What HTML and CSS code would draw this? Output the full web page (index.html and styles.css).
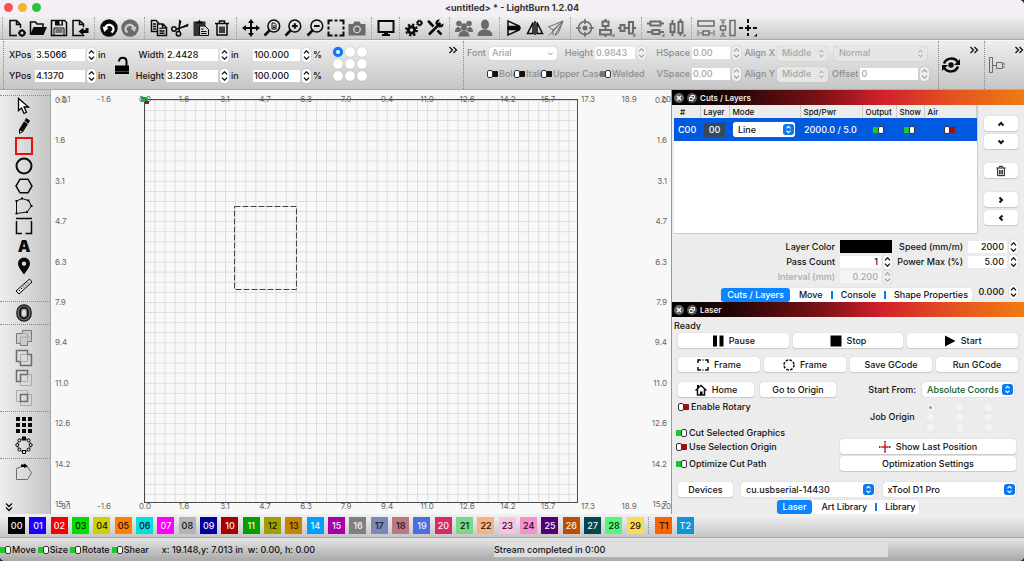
FILE: index.html
```html
<!DOCTYPE html>
<html lang="en">
<head>
<meta charset="utf-8">
<title>&lt;untitled&gt; * - LightBurn 1.2.04</title>
<link rel="stylesheet" href="styles.css">
</head>
<body>
<svg class="defs" aria-hidden="true">
  <symbol id="step" viewBox="0 0 9 14"><path d="M2.300 5 4.500 2.800 6.700 5M2.300 9 4.500 11.200 6.700 9" fill="none" stroke="currentColor" stroke-width="1.300" stroke-linecap="round" stroke-linejoin="round"/></symbol>
  <symbol id="more" viewBox="0 0 10 8"><path d="M1.500 1 4.500 4 1.500 7M5.500 1 8.500 4 5.500 7" fill="none" stroke="currentColor" stroke-width="1.300"/></symbol>
  <symbol id="trash" viewBox="0 0 18 18"><path d="M2 4.500h14M6.500 4V2h5v2M4 5v11h10V5M7 7.500v6.500M9 7.500v6.500M11 7.500v6.500" fill="none" stroke="currentColor" stroke-width="1.500"/></symbol>
  <symbol id="float" viewBox="0 0 10 10"><circle cx="5" cy="5" r="5" fill="#555"/><path d="M2.500 4.500h3.500v3h-3.500zM4 4V2.500h3.500v3H6.500" fill="none" stroke="#fff"/></symbol>
  <symbol id="close" viewBox="0 0 10 10"><circle cx="5" cy="5" r="5" fill="#666"/><path d="M3 3l4 4M7 3 3 7" stroke="#fff" stroke-width="1.500"/></symbol>
</svg>
<div class="window">
  <header class="titlebar">
    <div class="lights"><span class="light red"></span><span class="light amber"></span><span class="light green"></span></div>
    <h1>&lt;untitled&gt; * - LightBurn 1.2.04</h1>
  </header>

  <nav class="toolbar" aria-label="Main">
    <div class="group n4">
      <button class="tool" aria-label="New"><svg viewBox="0 0 18 18"><path class="s" d="M9 16.500H2v-15h6.500l4 4V9M8.500 1.500v4h4"/><circle class="s b" cx="14" cy="14" r="2.500"/><path class="s" d="M14 10v1.500M14 16.500V18M10 14h1.500M16 14h2"/></svg></button>
      <button class="tool" aria-label="Open"><svg viewBox="0 0 18 18"><path class="s" d="M1.500 15.500V3h5l1.500 2h6v3"/><path d="M4.500 8H18l-3.500 8H1z"/></svg></button>
      <button class="tool" aria-label="Save"><svg viewBox="0 0 18 18"><path class="s" d="M1.500 1.500h13l2 2v13h-15z"/><path d="M5 1h8v5.500H5z"/><path fill="#ddd" d="M9.500 2h2v3.500h-2z"/><path class="s thin" d="M4 16.500V9h10v7.500M5.500 11h7M5.500 13h7"/></svg></button>
      <button class="tool" aria-label="Import"><svg viewBox="0 0 18 18"><path class="s" d="M12.500 8V5l-4-3.500H2v15h10.500V16M8.500 1.500v4h4"/><path d="M17.500 9v5h-5v2.500L7.500 12.500l5-4V11h2V9z"/></svg></button>
    </div>
    <div class="group n2">
      <button class="tool" aria-label="Undo"><svg viewBox="0 0 18 18"><circle cx="9" cy="9" r="8.700"/><path d="M5 9.500C6 5.500 11 4.500 13 8c1 2 .5 4-1.500 5.500" fill="none" stroke="#fff" stroke-width="2.200"/><path d="M2.500 7.500l6 1.500-4.200 4z" fill="#fff"/></svg></button>
      <button class="tool gray" aria-label="Redo"><svg viewBox="0 0 18 18"><circle cx="9" cy="9" r="8.700"/><path d="M13 9.500C12 5.500 7 4.500 5 8c-1 2-.5 4 1.500 5.500" fill="none" stroke="#ccc" stroke-width="2.200"/><path d="M15.500 7.500l-6 1.500 4.200 4z" fill="#ccc"/></svg></button>
    </div>
    <div class="group n4">
      <button class="tool" aria-label="Copy"><svg viewBox="0 0 18 18"><path class="s" d="M7 12.500H1.500v-11H6l3 3M3 5h3M3 7.500h3M3 10h3"/><path class="s" d="M7.500 5h5.500l3.500 3.500v8h-9zM12.500 5v4h4M9.500 9.500h2M9.500 12h5M9.500 14.200h5"/></svg></button>
      <button class="tool" aria-label="Cut"><svg viewBox="0 0 18 18"><circle class="s" cx="3" cy="10" r="2.200"/><circle class="s" cx="7.500" cy="14.700" r="2.200"/><path class="s" d="M5 10.500 17 6M8 12.500 9 1.500"/><path d="M8 9.500 17.500 4.500l-.5 3zM7.500 10.500 8 .5l2.500 2z"/></svg></button>
      <button class="tool" aria-label="Paste"><svg viewBox="0 0 18 18"><path fill="#333" d="M1.500 2.500h12V7H7v10H1.500z"/><path d="M4.500 4.500V2.500h2L7.500.500l1 2h2v2z"/><path class="s thin" fill="#ddd" d="M7.500 7h5.500l3.500 3.500v6h-9zM9 10h2.500M9 12.500h5.500M9 14.500h5.500"/></svg></button>
      <button class="tool" aria-label="Delete"><svg><use href="#trash"/></svg></button>
    </div>
    <div class="group n6">
      <button class="tool" aria-label="Pan"><svg viewBox="0 0 18 18"><path class="s b" d="M9 3v12M3 9h12"/><path d="M9 0l3 4H6zM9 18l3-4H6zM0 9l4-3v6zM18 9l-4-3v6z"/></svg></button>
      <button class="tool" aria-label="Zoom to page"><svg viewBox="0 0 18 18"><circle class="s" cx="10.800" cy="7" r="5.900"/><path class="s w" d="M6.500 11.500 1.500 16.500"/><path class="s thin" d="M9 4h2.500l1.500 1.500V10H9zM10 7h2M10 8.500h2"/></svg></button>
      <button class="tool" aria-label="Zoom in"><svg viewBox="0 0 18 18"><circle class="s" cx="10.800" cy="7" r="5.900"/><path class="s w" d="M6.500 11.500 1.500 16.500"/><path class="s b" d="M8 7h5.600M10.800 4.200v5.600"/></svg></button>
      <button class="tool" aria-label="Zoom out"><svg viewBox="0 0 18 18"><circle class="s" cx="10.800" cy="7" r="5.900"/><path class="s w" d="M6.500 11.500 1.500 16.500"/><path class="s b" d="M8 7h5.600"/></svg></button>
      <button class="tool" aria-label="Frame selection"><svg viewBox="0 0 18 18"><path class="s b" d="M1.500 5.500v-4h4M7.500 1.500h3M12.500 1.500h4v4M16.500 7.500v3M16.500 12.500v4h-4M10.500 16.500h-3M5.500 16.500h-4v-4M1.500 10.500v-3"/></svg></button>
      <button class="tool gray" aria-label="Camera"><svg viewBox="0 0 18 18"><path fill-rule="evenodd" d="M.5 5h4.500l1.500-2.500h5L13 5h4.500v11.500H.5zM9 6.500a3.900 3.900 0 1 0 .01 0z"/><circle cx="9" cy="10.400" r="2.600"/></svg></button>
    </div>
    <div class="group n1">
      <button class="tool" aria-label="Preview"><svg viewBox="0 0 18 18"><path class="s b" d="M1.500 2h15v11h-15z"/><path d="M7 13h4v2h2v2H5v-2h2z"/></svg></button>
    </div>
    <div class="group n2">
      <button class="tool" aria-label="Settings"><svg viewBox="0 0 18 18"><circle cx="6.500" cy="11" r="3.200" fill="none" stroke="currentColor" stroke-width="3"/><circle cx="6.500" cy="11" r="5.500" fill="none" stroke="currentColor" stroke-width="2" stroke-dasharray="2.300 2"/><circle cx="14.500" cy="4" r="1.900" fill="none" stroke="currentColor" stroke-width="1.700"/><circle cx="14.500" cy="4" r="3" fill="none" stroke="currentColor" stroke-dasharray="1.300 1.050"/></svg></button>
      <button class="tool" aria-label="Device settings"><svg viewBox="0 0 18 18"><path d="M3 15.500 14.500 4M3.500 3.500l4 4" class="s w"/><path d="M1 2.500 3 1l3.500 3.500L4.500 6z"/><path class="s w" d="M11.500 11.500 15.500 15.500"/><path d="M17.500 4.500 14.500 6 12 3.500 14 .5c-3-.5-5 2-4.500 4.500l3.500 3.500c3 .500 5-1.500 4.500-4z"/></svg></button>
    </div>
    <div class="group n2">
      <button class="tool gray" aria-label="Group"><svg viewBox="0 0 18 18"><circle cx="4" cy="4.500" r="2.800"/><circle cx="14" cy="4.500" r="2.800"/><path d="M0 13c0-4 2-5 4-5l3 3-3 2zM18 13c0-4-2-5-4-5l-3 3 3 2z"/><ellipse cx="9" cy="8" rx="3" ry="3.700"/><path d="M3.500 17.500c0-4 2.500-5 4-5.500h3c1.500.5 4 1.500 4 5.500z"/></svg></button>
      <button class="tool gray" aria-label="Ungroup"><svg viewBox="0 0 18 18"><ellipse cx="9" cy="5.500" rx="4" ry="5"/><path d="M1.500 17c0-4.500 3-5.500 5.500-6.500h4c2.500 1 5.500 2 5.500 6.500z"/></svg></button>
    </div>
    <div class="group n3">
      <button class="tool" aria-label="Flip vertical"><svg viewBox="0 0 18 18"><path class="s" d="M3 2v5.500h12zM3 16v-5.500h12zM2 9h14"/></svg></button>
      <button class="tool" aria-label="Flip horizontal"><svg viewBox="0 0 18 18"><path class="s" d="M1.500 14.500H7V3.500zM16.500 14.500H11V3.500zM9 2v14"/></svg></button>
      <button class="tool gray" aria-label="Mirror across line"><svg viewBox="0 0 18 18"><path class="s thin" d="M1.500 8 16 2 6 11zM8 16.500 16 2l-4.500 11.500zM2 16.500 16 2M6 11v5"/></svg></button>
    </div>
    <div class="group n3">
      <button class="tool gray" aria-label="Center on page"><svg viewBox="0 0 18 18"><circle class="s" cx="9" cy="9" r="6.500"/><circle cx="9" cy="9" r="2.500"/><path class="s" d="M9 0v5M9 13v5M0 9h5M13 9h5"/></svg></button>
      <button class="tool gray" aria-label="Align vertical centers"><svg viewBox="0 0 18 18"><path class="s b" d="M5.500 2.500h6v4.500h-6zM3 11h11v4.500H3zM8.500 0v2M8.500 6.500V11M8.500 15.500V18"/><path d="M17.500 14.500v3h-3z"/></svg></button>
      <button class="tool gray" aria-label="Align horizontal centers"><svg viewBox="0 0 18 18"><path class="s b" d="M2.500 6h4v6h-4zM11 3h4v11.500h-4zM0 9h3M7 9h4M15.500 9H18"/><path d="M17.500 14.500v3h-3z"/></svg></button>
    </div>
    <div class="group n2">
      <button class="tool gray" aria-label="Distribute vertically"><svg viewBox="0 0 18 18"><path class="s b" d="M3.500 2.500h10v4h-10zM5.500 11h7v4h-7zM0 4.500h3.500M13.500 4.500H17M0 13h5.500M12.500 13H17"/><path d="M17.500 14.500v3h-3z"/></svg></button>
      <button class="tool gray" aria-label="Distribute horizontally"><svg viewBox="0 0 18 18"><path class="s b" d="M2.500 5h4v8h-4zM10.500 3h4v11h-4zM4.500 1v4M4.500 13v4M12.500 0v3M12.500 14v3"/><path d="M17.500 14.500v3h-3z"/></svg></button>
    </div>
    <div class="group n3">
      <button class="tool gray" aria-label="Match width"><svg viewBox="0 0 18 18"><path class="s" d="M1 2h16v5H1zM6 12h6v4H6z"/><path class="s thin" d="M1 11v6M17 11v6M2 14h4M12 14h4"/></svg></button>
      <button class="tool gray" aria-label="Match height"><svg viewBox="0 0 18 18"><path class="s" d="M12 1.500h5v15h-5zM2.500 7h5v4h-5z"/><path class="s thin" d="M2 1h6M2 17h6M5 2v5M5 11v5M3.500 4 5 2l1.500 2M3.500 14 5 16l1.500-2"/></svg></button>
      <button class="tool" aria-label="Move to position"><svg viewBox="0 0 18 18"><path class="s b" d="M9 0v4M9 6v6M9 14v3M0 9h4M6 9h6M14 9h4"/><path d="M18 14.500v3h-3z"/></svg></button>
    </div>
  </nav>

  <section class="options" aria-label="Object properties">
    <div class="opt-group position">
      <div class="pos-grid">
        <label for="xpos">XPos</label><input id="xpos" value="3.5066"><button class="step" aria-label="Step X"><svg><use href="#step"/></svg></button><span>in</span>
        <button class="lock" aria-label="Lock aspect ratio"><svg viewBox="0 0 16 19"><path d="M5 5.500c0-5 7.500-5 7.500 0V10" fill="none" stroke="#000" stroke-width="2"/><path d="M1 9.500h14V18H1z"/><path d="M1 15.500h14" stroke="#444"/></svg></button>
        <label for="w" class="end">Width</label><input id="w" value="2.4428"><button class="step" aria-label="Step width"><svg><use href="#step"/></svg></button><span>in</span>
        <input aria-label="Width percent" value="100.000"><button class="step" aria-label="Step width percent"><svg><use href="#step"/></svg></button><span>%</span>
        <label for="ypos">YPos</label><input id="ypos" value="4.1370"><button class="step" aria-label="Step Y"><svg><use href="#step"/></svg></button><span>in</span>
        <label for="h" class="end">Height</label><input id="h" value="3.2308"><button class="step" aria-label="Step height"><svg><use href="#step"/></svg></button><span>in</span>
        <input aria-label="Height percent" value="100.000"><button class="step" aria-label="Step height percent"><svg><use href="#step"/></svg></button><span>%</span>
      </div>
      <div class="anchors" role="radiogroup" aria-label="Anchor">
        <input type="radio" name="a" aria-label="Top left" checked><input type="radio" name="a" aria-label="Top"><input type="radio" name="a" aria-label="Top right"><input type="radio" name="a" aria-label="Left"><input type="radio" name="a" aria-label="Center"><input type="radio" name="a" aria-label="Right"><input type="radio" name="a" aria-label="Bottom left"><input type="radio" name="a" aria-label="Bottom"><input type="radio" name="a" aria-label="Bottom right">
      </div>
      <button class="more" aria-label="More"><svg><use href="#more"/></svg></button>
    </div>
    <div class="opt-group text-opts">
      <div class="text-grid">
        <label for="font">Font</label>
        <select id="font" class="combo" disabled><option>Arial</option></select>
        <label for="fh" class="end">Height</label><input id="fh" value="0.9843" disabled><button class="step" aria-label="Step font height" disabled><svg><use href="#step"/></svg></button>
        <label for="hs" class="end">HSpace</label><input id="hs" value="0.00" disabled><button class="step" aria-label="Step HSpace" disabled><svg><use href="#step"/></svg></button>
        <label for="ax" class="end">Align X</label><select id="ax" class="pop" disabled><option>Middle</option></select>
        <select class="pop wide" aria-label="Text mode" disabled><option>Normal</option></select>
        <div class="styles">
          <label><input type="checkbox" class="tog">Bold</label><label><input type="checkbox" class="tog">Italic</label><label class="upper"><input type="checkbox" class="tog">Upper Case</label><label class="rest"><input type="checkbox" class="tog" checked>Welded</label>
        </div>
        <label for="vs" class="end">VSpace</label><input id="vs" value="0.00" disabled><button class="step" aria-label="Step VSpace" disabled><svg><use href="#step"/></svg></button>
        <label for="ay" class="end">Align Y</label><select id="ay" class="pop" disabled><option>Middle</option></select>
        <div class="offset"><label for="off">Offset</label><input id="off" value="0" disabled><button class="step" aria-label="Step offset" disabled><svg><use href="#step"/></svg></button></div>
      </div>
    </div>
    <div class="opt-group extra">
      <button class="tool big" aria-label="Rotate"><svg viewBox="0 0 18 18"><circle cx="9" cy="9" r="2.700"/><path class="s w" d="M2 7.500C4 1.500 13 1 15.500 6M16 10.500C14 16.500 5 17 2.500 12"/><path d="M18 3v6h-6zM0 15V9h6z"/></svg></button>
      <button class="more" aria-label="More"><svg><use href="#more"/></svg></button>
    </div>
    <div class="opt-group last">
      <button class="tool big gray" aria-label="Dock left"><svg viewBox="0 0 18 18"><path class="s thin" d="M2.500 1.500h3v15h-3zM9.500 6.500h6v6h-6zM6 9.500h3.500M15.500 8H18M15.500 11H18"/></svg></button>
      <button class="more" aria-label="More"><svg><use href="#more"/></svg></button>
    </div>
  </section>

  <main class="main">
    <nav class="side" aria-label="Drawing tools">
      <div class="side-group first">
        <button class="tool" aria-label="Select"><svg viewBox="0 0 18 18"><path fill="#fff" stroke="#000" stroke-width="1.300" d="M3.500 1.500v12l3-2.500 2.500 5.500 2.500-1.200L9 10h4.500z"/></svg></button>
        <button class="tool" aria-label="Draw lines"><svg viewBox="0 0 18 18"><path d="M11 1 15 3.500 13.500 6.500 9.500 4zM9 4.500l4 2.500-5 8L4 12.500z"/><path class="s thin" d="M4.500 12.500v4l3.500-2z"/></svg></button>
        <button class="tool" aria-label="Rectangle"><svg viewBox="0 0 18 18"><path fill="none" stroke="#e3120b" stroke-width="2" d="M1 1h16v16H1z"/></svg></button>
        <button class="tool" aria-label="Ellipse"><svg viewBox="0 0 18 18"><circle class="s b" cx="9" cy="9" r="7.500"/></svg></button>
        <button class="tool" aria-label="Polygon"><svg viewBox="0 0 18 18"><path class="s" d="M5 2.200h8L17 9l-4 6.800H5L1 9z"/></svg></button>
        <button class="tool" aria-label="Edit nodes"><svg viewBox="0 0 18 18"><path class="s thin" d="M1.500 16.500V4L7 1.500l6.500 2L16.500 9l-4.500 6z"/><path d="M6 .5h2v2H6zM12.500 2.500h2v2h-2zM15.500 8h2v2h-2zM11 14h2v2h-2zM.5 15.500h2v2h-2zM.5 3h2v2h-2z"/></svg></button>
        <button class="tool" aria-label="Trim shapes"><svg viewBox="0 0 18 18"><path class="s" d="M1 1.500h16M1.500 4v12.500H7M16.500 4v12.500h-6"/></svg></button>
        <button class="tool letter" aria-label="Create text">A</button>
        <button class="tool" aria-label="Position laser"><svg viewBox="0 0 18 18"><path fill-rule="evenodd" d="M9 17.500C6 13 3 10 3 6.500a6 6 0 0 1 12 0C15 10 12 13 9 17.500zM9 4.500a2.200 2.200 0 1 0 .01 0z"/></svg></button>
        <button class="tool" aria-label="Measure"><svg viewBox="0 0 18 18"><path class="s thin" d="M1 14 14.500 2l2.500 3L4 17zM4 13l1 1M6 11l1 1M8 9.500l1 1M10 7.500l1 1M12 5.500l1 1"/></svg></button>
      </div>
      <div class="side-group tight">
        <button class="tool" aria-label="Offset shapes"><svg viewBox="0 0 18 18"><rect x="2" y="1" width="14" height="16" rx="7" fill="#777" stroke="#222" stroke-width="1.500"/><rect x="5" y="3.500" width="8" height="11" rx="4" fill="none" stroke="#000" stroke-width="1.500"/><rect x="7" y="5.500" width="4" height="7" rx="2" fill="#ddd"/></svg></button>
      </div>
      <div class="side-group">
        <button class="tool gray" aria-label="Weld"><svg viewBox="0 0 18 18"><path fill="#ccc" stroke="#777" d="M1.500 4.500h6v-3h9v11h-4v4h-7v-2h-4z"/><path class="s faint" d="M7 4.500h5.500v8M5.500 14V8h11"/></svg></button>
        <button class="tool gray" aria-label="Boolean union"><svg viewBox="0 0 18 18"><path class="s" d="M1.500 1.500h11v4h4v11h-11v-4h-4z"/><path class="s faint" d="M5.500 12.500v-7h7v7z"/></svg></button>
        <button class="tool gray" aria-label="Boolean subtract"><svg viewBox="0 0 18 18"><path class="s faint" d="M5.500 5.500h11v11h-11z"/><path class="s" d="M1.500 1.500h11v4h-7v7h-4z"/><path class="s faint" d="M12.500 5.500v7h-7"/></svg></button>
        <button class="tool gray" aria-label="Boolean intersect"><svg viewBox="0 0 18 18"><path class="s faint" d="M1.500 1.500h11v11h-11zM5.500 5.500h11v11h-11z"/><path class="s" d="M5.500 5.500h7v7h-7z"/></svg></button>
      </div>
      <div class="side-group">
        <button class="tool" aria-label="Grid array"><svg viewBox="0 0 18 18"><path d="M1 1h4v4H1zM7 1h4v4H7zM13 1h4v4h-4zM1 7h4v4H1zM7 7h4v4H7zM13 7h4v4h-4zM1 13h4v4H1zM7 13h4v4H7zM13 13h4v4h-4z"/></svg></button>
        <button class="tool" aria-label="Circular array"><svg viewBox="0 0 18 18"><circle class="s thin" cx="9" cy="9" r="6.500"/><g fill="#ddd" stroke="#000"><circle cx="4.400" cy="4.400" r="1.500"/><circle cx="13.600" cy="4.400" r="1.500"/><circle cx="2.300" cy="9" r="1.500"/><circle cx="15.700" cy="9" r="1.500"/><circle cx="4.400" cy="13.600" r="1.500"/><circle cx="13.600" cy="13.600" r="1.500"/><path d="M7.500 14.500h3v3h-3z"/></g><path d="M7 .5h4v4H7z"/></svg></button>
      </div>
      <div class="side-group">
        <button class="tool gray" aria-label="Copy along path"><svg viewBox="0 0 18 18"><path class="s thin" d="M1.500 16.500V5.500L8 3l5 1.500 3.500 5.500-4 6.500z"/><path fill="#000" d="M6 1.500v2.500h3V5l4-2-4-2.500v1z"/></svg></button>
      </div>
      <button class="more down" aria-label="More tools"><svg><use href="#more"/></svg></button>
    </nav>

    <section class="canvas" aria-label="Workspace">
      <svg class="sheet" viewBox="51 90 620 424" preserveAspectRatio="xMinYMin slice">
        <defs><pattern id="grid" x="144.300" y="100" width="10.100" height="10.100" patternUnits="userSpaceOnUse"><path d="M0 .5h10.100M.5 0v10.100" stroke="#dcdcdc" fill="none"/></pattern></defs>
        <rect x="144" y="99" width="434" height="404" fill="url(#grid)"/>
        <rect x="144.500" y="99.500" width="433" height="403" fill="none" stroke="#4a4a4a"/>
        <rect x="234.500" y="206.500" width="62" height="83" fill="none" stroke="#444" stroke-dasharray="6 2"/>
        <g class="ruler">
          <g text-anchor="middle">
            <text x="64" y="102">-3.1</text><text x="104" y="102">-1.6</text><text x="145" y="102">0.0</text><text x="184" y="102">1.6</text><text x="225" y="102">3.1</text><text x="265" y="102">4.7</text><text x="306" y="102">6.3</text><text x="346" y="102">7.9</text><text x="387" y="102">9.4</text><text x="427" y="102">11.0</text><text x="467" y="102">12.6</text><text x="508" y="102">14.2</text><text x="548" y="102">15.7</text><text x="588" y="102">17.3</text><text x="629" y="102">18.9</text><text x="666" y="102">20</text>
            <text x="64" y="509">-3.1</text><text x="104" y="509">-1.6</text><text x="145" y="509">0.0</text><text x="184" y="509">1.6</text><text x="225" y="509">3.1</text><text x="265" y="509">4.7</text><text x="306" y="509">6.3</text><text x="346" y="509">7.9</text><text x="387" y="509">9.4</text><text x="427" y="509">11.0</text><text x="467" y="509">12.6</text><text x="508" y="509">14.2</text><text x="548" y="509">15.7</text><text x="588" y="509">17.3</text><text x="629" y="509">18.9</text><text x="666" y="509">20</text>
          </g>
          <text x="55" y="103">0.0</text><text x="55" y="143">1.6</text><text x="55" y="184">3.1</text><text x="55" y="224">4.7</text><text x="55" y="265">6.3</text><text x="55" y="305">7.9</text><text x="55" y="345">9.4</text><text x="55" y="386">11.0</text><text x="55" y="426">12.6</text><text x="55" y="467">14.2</text><text x="55" y="507">15.7</text>
          <g text-anchor="end"><text x="667" y="103">0.0</text><text x="667" y="143">1.6</text><text x="667" y="184">3.1</text><text x="667" y="224">4.7</text><text x="667" y="265">6.3</text><text x="667" y="305">7.9</text><text x="667" y="345">9.4</text><text x="667" y="386">11.0</text><text x="667" y="426">12.6</text><text x="667" y="467">14.2</text><text x="667" y="507">15.7</text></g>
        </g>
        <path d="M141 97h7v5h-7z" fill="#0fc23a"/><path d="M142 98h3M146 99v2" stroke="#064"/><path d="M145 101h4v3h-4z" fill="#8a2414"/>
      </svg>
    </section>

    <aside class="dock">
      <section class="panel cuts">
        <header class="panel-head"><button aria-label="Close"><svg><use href="#close"/></svg></button><button aria-label="Float"><svg><use href="#float"/></svg></button><h2>Cuts / Layers</h2></header>
        <div class="layers">
          <div class="table-wrap">
            <table>
              <colgroup><col class="c1"><col class="c2"><col class="c3"><col class="c4"><col class="c5"><col class="c6"><col></colgroup>
              <thead><tr><th>#</th><th>Layer</th><th>Mode</th><th>Spd/Pwr</th><th>Output</th><th>Show</th><th>Air</th></tr></thead>
              <tbody><tr><td>C00</td><td><span class="chip">00</span></td><td><select class="pop blue mode" aria-label="Mode"><option>Line</option></select></td><td>2000.0 / 5.0</td><td class="mid"><input type="checkbox" class="tog" aria-label="Output" checked></td><td class="mid"><input type="checkbox" class="tog" aria-label="Show" checked></td><td class="mid"><input type="checkbox" class="tog" aria-label="Air"></td></tr></tbody>
            </table>
          </div>
          <div class="layer-buttons">
            <button class="btn" aria-label="Move up"><svg viewBox="0 0 8 8"><path class="s b" d="M1.500 5.500 4 3l2.500 2.500"/></svg></button>
            <button class="btn gap-b" aria-label="Move down"><svg viewBox="0 0 8 8"><path class="s b" d="M1.500 2.500 4 5l2.500-2.500"/></svg></button>
            <button class="btn gap-b" aria-label="Delete layer"><svg class="bin"><use href="#trash"/></svg></button>
            <button class="btn" aria-label="Move right"><svg viewBox="0 0 8 8"><path class="s b" d="M2.500 1.500 5 4 2.500 6.500"/></svg></button>
            <button class="btn" aria-label="Move left"><svg viewBox="0 0 8 8"><path class="s b" d="M5.500 1.500 3 4l2.500 2.500"/></svg></button>
          </div>
        </div>
        <div class="params">
          <span>Layer Color</span><button class="color" aria-label="Layer color black"></button>
          <label for="spd">Speed (mm/m)</label><span class="field"><input id="spd" value="2000"><button class="step" aria-label="Step speed"><svg><use href="#step"/></svg></button></span>
          <label for="pass">Pass Count</label><span class="field"><input id="pass" value="1"><button class="step" aria-label="Step passes"><svg><use href="#step"/></svg></button></span>
          <label for="pow">Power Max (%)</label><span class="field"><input id="pow" value="5.00"><button class="step" aria-label="Step power"><svg><use href="#step"/></svg></button></span>
          <label for="int" class="off">Interval (mm)</label><span class="field"><input id="int" value="0.200" disabled><button class="step" aria-label="Step interval" disabled><svg><use href="#step"/></svg></button></span>
        </div>
        <div class="tab-row">
          <div class="tabs" role="tablist"><button role="tab" class="on" aria-selected="true">Cuts / Layers</button><button role="tab">Move</button><button role="tab">Console</button><button role="tab">Shape Properties</button></div>
          <span class="field"><input value="0.000" aria-label="Z offset"><button class="step" aria-label="Step Z offset"><svg><use href="#step"/></svg></button></span>
        </div>
      </section>

      <section class="panel laser">
        <header class="panel-head"><button aria-label="Close"><svg><use href="#close"/></svg></button><button aria-label="Float"><svg><use href="#float"/></svg></button><h2>Laser</h2></header>
        <p class="ready">Ready</p>
        <div class="laser-body">
          <div class="thirds">
            <button class="btn"><svg viewBox="0 0 12 12"><path d="M1 .5h4v11H1zM7.500.5h4v11h-4z"/></svg>Pause</button>
            <button class="btn"><svg viewBox="0 0 12 12"><path d="M.5.5h11v11H.5z"/></svg>Stop</button>
            <button class="btn"><svg viewBox="0 0 12 12"><path d="M1 .5 11.500 6 1 11.500z"/></svg>Start</button>
          </div>
          <div class="quarters">
            <button class="btn"><svg viewBox="0 0 12 12"><path class="s" d="M1 4V1h3M8 1h3v3M11 8v3H8M4 11H1V8M5.500 1h1M5.500 11h1"/></svg>Frame</button>
            <button class="btn"><svg viewBox="0 0 12 12"><circle class="s" cx="6" cy="6" r="5" stroke-dasharray="2.600 1.300"/></svg>Frame</button>
            <button class="btn">Save GCode</button>
            <button class="btn">Run GCode</button>
          </div>
          <div class="home-row">
            <button class="btn home"><svg viewBox="0 0 12 12"><path class="s" d="M.5 6.500 6 1.500l5.500 5M2.500 5v6h7V5"/><path d="M5 7.500h2.500V11H5zM2 1h2v3H2z"/></svg>Home</button>
            <button class="btn home">Go to Origin</button>
            <label for="from">Start From:</label>
            <select id="from" class="pop blue from"><option>Absolute Coords</option></select>
          </div>
          <div class="split">
            <div class="checks">
              <label class="rotary"><input type="checkbox" class="tog">Enable Rotary</label>
              <label><input type="checkbox" class="tog" checked>Cut Selected Graphics</label>
              <label class="sel"><input type="checkbox" class="tog">Use Selection Origin</label>
              <label><input type="checkbox" class="tog" checked>Optimize Cut Path</label>
            </div>
            <div class="job">
              <div class="origin"><span>Job Origin</span>
                <div class="origin-grid" role="radiogroup" aria-label="Job Origin"><input type="radio" name="o" aria-label="Back left" checked disabled><input type="radio" name="o" aria-label="Back" disabled><input type="radio" name="o" aria-label="Back right" disabled><input type="radio" name="o" aria-label="Left" disabled><input type="radio" name="o" aria-label="Center" disabled><input type="radio" name="o" aria-label="Right" disabled><input type="radio" name="o" aria-label="Front left" disabled><input type="radio" name="o" aria-label="Front" disabled><input type="radio" name="o" aria-label="Front right" disabled></div>
              </div>
              <button class="btn"><svg viewBox="0 0 12 12"><path class="s" d="M6 0v2.500M6 9.500V12M0 6h2.500M9.500 6H12" stroke-dasharray="1.500 .5"/><path stroke="#d11" stroke-width="1.500" d="M6 3v6M3 6h6"/></svg>Show Last Position</button>
              <button class="btn">Optimization Settings</button>
            </div>
          </div>
          <div class="devices">
            <button class="btn">Devices</button>
            <select class="pop blue" aria-label="Port"><option>cu.usbserial-14430</option></select>
            <select class="pop blue" aria-label="Laser"><option>xTool D1 Pro</option></select>
          </div>
        </div>
        <div class="tabs center" role="tablist"><button role="tab" class="on" aria-selected="true">Laser</button><button role="tab">Art Library</button><button role="tab">Library</button></div>
      </section>
    </aside>
  </main>

  <section class="palette" aria-label="Color palette">
    <div class="swatches">
      <button class="k00 lt">00</button><button class="k01 lt">01</button><button class="k02 lt">02</button><button class="k03">03</button><button class="k04">04</button><button class="k05">05</button><button class="k06">06</button><button class="k07 lt">07</button><button class="k08">08</button><button class="k09 lt">09</button><button class="k10 lt">10</button><button class="k11 lt">11</button><button class="k12">12</button><button class="k13">13</button><button class="k14 lt">14</button><button class="k15 lt">15</button><button class="k16 lt">16</button><button class="k17">17</button><button class="k18">18</button><button class="k19 lt">19</button><button class="k20 lt">20</button><button class="k21">21</button><button class="k22">22</button><button class="k23">23</button><button class="k24">24</button><button class="k25 lt">25</button><button class="k26 lt">26</button><button class="k27 lt">27</button><button class="k28">28</button><button class="k29">29</button>
    </div>
    <div class="swatches tools"><button class="t1">T1</button><button class="t2 lt">T2</button></div>
  </section>

  <footer class="status">
    <div class="modes">
      <label><input type="checkbox" class="tog" checked>Move</label><label><input type="checkbox" class="tog" checked>Size</label><label><input type="checkbox" class="tog" checked>Rotate</label><label><input type="checkbox" class="tog" checked>Shear</label>
      <span class="coords">x: 19.148,y: 7.013 in&nbsp; w: 0.00, h: 0.00</span>
    </div>
    <div class="progress">Stream completed in 0:00</div>
  </footer>
</div>
</body>
</html>
```
FILE: styles.css
```css
*, ::before, ::after { box-sizing: border-box; }
body {
  margin: 0;
  background: #2b1c3d;
  color: #111;
  font: 500 9px/12px Inter, "Liberation Sans", sans-serif;
}
button, input, select { font: inherit; color: inherit; margin: 0; padding: 0; border: 0; background: none; border-radius: 0; }
h1, h2, p { margin: 0; font-size: inherit; }
.defs { position: absolute; width: 0; height: 0; }
.window { display: flex; flex-direction: column; min-height: 100vh; border-radius: 0 5px 5px 5px; overflow: hidden; background: #ececec; }

/* Title bar */
.titlebar { display: grid; grid-template-columns: 1fr auto 1fr; align-items: center; height: 17px; padding: 0 4px 2px; background: #f4eef5; }
.titlebar h1 { font-weight: 700; color: #333; }
.lights { display: flex; gap: 5px; }
.light { width: 9px; height: 9px; border-radius: 50%; }
.red { background: #f4574f; }
.amber { background: #f5b32e; }
.green { background: #2cc23f; }

/* Icon toolbar */
.toolbar { display: flex; height: 23px; padding-left: 2px; background: linear-gradient(#eee, #c9c9c9); border-bottom: 1px solid #aaa; }
.group { display: flex; align-items: center; justify-content: space-around; padding: 0 3px; border-left: 1px dotted #999; }
.n1 { width: 28px; }
.n2 { width: 50px; }
.n3 { width: 71px; }
.n4 { width: 92px; }
.n6 { width: 135px; }
.tool { display: flex; align-items: center; justify-content: center; width: 18px; height: 20px; color: #0a0a0a; }
.tool svg { width: 18px; height: 18px; fill: currentColor; }
.gray { color: #6b6b6b; }
.tool .s, .s { fill: none; stroke: currentColor; stroke-width: 1.5; }
.tool .thin, .thin { stroke-width: 1; }
.tool .b, .b { stroke-width: 2; }
.tool .w { stroke-width: 2.5; }
.tool .faint { stroke: #aaa; stroke-width: 1; }

/* Property toolbar */
.options { display: flex; height: 50px; background: linear-gradient(#eee, #c6c6c6); border-top: 1px solid #f8f8f8; border-bottom: 1px solid #aaa; }
.opt-group { display: flex; align-items: center; border-left: 1px dotted #888; }
.position { width: 460px; padding: 0 5px; margin-left: 3px; }
.text-opts { flex: 1 0 474px; padding-left: 3px; }
.pos-grid, .text-grid { display: grid; grid-template-rows: 21px 21px; column-gap: 2px; align-items: center; }
.pos-grid { grid-template-columns: 24px 50px 9px 12px 20px 30px 52px 9px 20px 47px 9px 10px; }
.text-grid { grid-template-columns: 20px 68px 34px 40px 9px 42px 38px 9px 32px 51px 99px; color: #8d8d8d; padding-bottom: 3px; }
.options label { white-space: nowrap; }
.end { text-align: right; }
.options input:not([type]) { width: 100%; height: 12px; padding: 0 1px; background: #fff; }
.text-grid input:disabled, .text-grid select:disabled { color: #a5a5a5; opacity: 1; }
.step { width: 9px; height: 14px; flex: none; background: #fff; border-radius: 4px; box-shadow: 0 0 1px #999; color: #222; }
.step svg { display: block; width: 9px; height: 14px; }
.step:disabled { color: #aaa; background: #f0f0f0; }
.lock { grid-row: 1 / 3; grid-column: 5; justify-self: center; }
.lock svg { display: block; width: 16px; height: 19px; }
.anchors { display: grid; grid-template-columns: repeat(3, 12px); grid-auto-rows: 12px; place-items: center; margin: 0 0 3px 9px; }
input[type="radio"] { appearance: none; width: 10px; height: 10px; border-radius: 50%; background: #fff; box-shadow: 0 0 1px #999; }
.anchors input:checked { border: 3px solid #0a7aff; }
.more { align-self: flex-start; margin: 5px 0 0 auto; color: #111; }
.more svg { display: block; width: 10px; height: 8px; }
.combo, .pop { appearance: none; width: 100%; height: 13px; padding: 0 14px 0 3px; background: #fff no-repeat right 1px center / 11px 11px; border-radius: 3px; box-shadow: 0 0 1px #999; }
.combo { background-image: url("data:image/svg+xml,%3Csvg xmlns='http://www.w3.org/2000/svg' viewBox='0 0 12 12'%3E%3Cpath d='M3.500 5 6 7.500 8.500 5' fill='none' stroke='%23888'/%3E%3C/svg%3E"); }
.pop { padding-left: 5px; height: 15px; }
.pop:disabled { background-color: #e6e6e6; background-image: url("data:image/svg+xml,%3Csvg xmlns='http://www.w3.org/2000/svg' viewBox='0 0 12 12'%3E%3Cpath d='M4 4.500 6 2.500 8 4.500M4 7.500 6 9.500 8 7.500' fill='none' stroke='%23888'/%3E%3C/svg%3E"); }
.blue { background-image: url("data:image/svg+xml,%3Csvg xmlns='http://www.w3.org/2000/svg' viewBox='0 0 12 12'%3E%3Crect width='12' height='12' rx='3' fill='%230a78f5'/%3E%3Cpath d='M3.800 4.800 6 2.600 8.200 4.800M3.800 7.200 6 9.400 8.200 7.200' fill='none' stroke='white' stroke-width='1.300'/%3E%3C/svg%3E"); }
.wide { width: auto; margin: 0 2px 0 4px; }
.styles { grid-column: 1 / 6; display: flex; padding-left: 20px; }
.styles label { display: flex; align-items: center; width: 27px; height: 12px; overflow: hidden; }
.styles .upper { width: 59px; }
.styles .rest { width: auto; }
.offset { display: flex; align-items: center; gap: 2px; padding-left: 2px; }
.offset input { flex: 1; min-width: 0; }
.extra { width: 46px; padding-left: 3px; }
.last { width: 40px; padding-left: 2px; }
.extra .more { margin-right: 5px; }
.big { height: 22px; }

/* Two-tone switches: coloured track with a white knob */
.tog { appearance: none; display: inline-flex; flex: none; width: 11px; height: 8px; margin-right: 1px; border-radius: 2px; vertical-align: middle; background: linear-gradient(#9b1010, #9b1010) right center / 8px 6px no-repeat; }
.tog::after { content: ""; width: 6px; height: 8px; border: 1px solid #333; border-radius: 2px; background: #fff; }
.tog:checked { justify-content: flex-end; background: linear-gradient(#19c92a, #19c92a) left center / 8px 6px no-repeat; }
.styles .tog { background-image: linear-gradient(#111, #111); }
.styles .tog:checked { background-image: linear-gradient(#777, #777); }

/* Workspace */
.main { display: flex; flex: 1; min-height: 0; }
.side { display: flex; flex-direction: column; flex: none; width: 51px; padding-top: 5px; background: linear-gradient(90deg, #ededed, #c6c6c6); border-right: 1px solid #aaa; }
.side-group { display: flex; flex-direction: column; align-items: center; padding: 3px 2px 3px 0; border-top: 1px dotted #888; }
.first { padding: 0 2px 5px 0; }
.tight { padding: 1px 2px 1px 0; }
.letter { font-size: 16px; font-weight: 900; }
.down { margin: auto auto 3px 4px; transform: rotate(90deg); }
.canvas { flex: 1; min-width: 0; overflow: hidden; background: #f8f8f8; border-right: 1px solid #999; }
.sheet { display: block; width: 100%; height: 100%; }
.ruler { font-size: 8px; font-weight: 400; fill: #666; }

/* Dock */
.dock { display: flex; flex-direction: column; flex: none; width: 352px; background: #ececec; }
.panel-head { display: flex; align-items: center; gap: 3px; height: 15px; padding: 0 2px; background: linear-gradient(90deg, #000, #1c0404 15%, #7a1216 42%, #d3202c 60%, #e3531f 80%, #ef7c12); color: #eee; }
.panel-head button, .panel-head svg { display: block; width: 10px; height: 10px; }
.panel-head h2 { font-weight: 600; font-size: 8px; }
.layers { display: flex; gap: 6px; padding: 0 6px 0 2px; }
.table-wrap { flex: 1; height: 129px; background: #fff; border: solid #ccc; border-width: 0 1px 1px 0; }
table { width: 100%; border-collapse: collapse; table-layout: fixed; }
.c1 { width: 26px; }
.c2 { width: 29px; }
.c3 { width: 71px; }
.c4 { width: 62px; }
.c5 { width: 34px; }
.c6 { width: 28px; }
th { height: 13px; padding: 0 0 0 3px; background: #ececec; border-right: 1px solid #ccc; font-size: 8px; font-weight: 500; line-height: 12px; text-align: left; }
th:first-child { padding-left: 6px; }
td { height: 23px; padding: 0 0 0 4px; background: #0059df; color: #fff; white-space: nowrap; }
.mid { padding: 0; text-align: center; }
.chip { display: block; width: 21px; background: #34495e; line-height: 14px; text-align: center; }
.mode { display: block; width: 62px; color: #111; }
.layer-buttons { display: flex; flex-direction: column; gap: 3px; width: 34px; padding-top: 11px; }
.btn { display: flex; align-items: center; justify-content: center; gap: 5px; height: 15px; background: #fff; border-radius: 3px; box-shadow: 0 0 1px #aaa, 0 1px 1px #ccc; white-space: nowrap; }
.btn svg { width: 12px; height: 12px; }
.layer-buttons .btn svg { width: 8px; height: 8px; }
.layer-buttons .btn .bin { width: 12px; height: 12px; }
.layer-buttons .gap-b { margin-bottom: 11px; }
.params { display: grid; grid-template-columns: 1fr 52px 66px 50px; grid-auto-rows: 15px; column-gap: 5px; align-items: center; padding: 5px 6px 0 0; text-align: right; white-space: nowrap; }
.off { color: #aaa; }
.color { height: 13px; background: #000; }
.field { display: flex; align-items: center; gap: 2px; }
.field input { flex: 1; width: 100%; min-width: 0; height: 12px; padding-right: 3px; background: #fff; text-align: right; }
.field input:disabled { color: #aaa; background: #f4f4f4; }
.tab-row { display: flex; justify-content: flex-end; gap: 1px; padding: 0 6px 0 0; margin-top: 1px; }
.tab-row .tabs { margin-top: 3px; }
.tab-row .field { width: 45px; height: 14px; }
.tab-row .field input { background: none; }
.tabs { display: flex; height: 14px; background: #fff; border-radius: 3px; box-shadow: 0 0 1px #bbb; white-space: nowrap; }
.tabs button { position: relative; padding: 0 9px; line-height: 14px; }
.tabs button:last-child { padding-right: 4px; }
.tabs button + button + button::before { content: ""; position: absolute; left: -1px; top: 3px; width: 2px; height: 8px; background: #0a78f5; }
.tabs .on { padding: 0 6px; background: #0a84ff; color: #fff; border-radius: 3px; }
.cuts { height: 212px; }

/* Laser panel */
.laser { display: flex; flex-direction: column; }
.ready { height: 10px; margin: 3px 0 3px 2px; overflow: hidden; }
.laser-body { display: flex; flex-direction: column; padding: 0 6px; }
.thirds { display: grid; grid-template-columns: repeat(3, 1fr); gap: 4px; }
.quarters { display: grid; grid-template-columns: repeat(4, 1fr); gap: 4px; margin: 9px 0 10px; }
.home-row { display: flex; align-items: center; gap: 6px; padding-right: 4px; }
.home { width: 76px; }
.home-row label { margin-left: auto; }
.from { width: 92px; color: #135c22; }
.split { display: flex; justify-content: space-between; padding: 4px 2px 0 0; }
.checks { display: flex; flex-direction: column; gap: 2px; margin-left: -2px; }
.checks label { display: flex; align-items: center; gap: 1px; }
.rotary { margin: 0 0 12px 2px; }
.sel { margin-bottom: 3px; }
.job { display: flex; flex-direction: column; gap: 2px; width: 176px; }
.origin { display: flex; align-items: center; margin-bottom: 5px; padding: 1px 0 0 30px; }
.origin-grid { display: grid; grid-template-columns: repeat(3, 29px); grid-auto-rows: 10px; place-items: center; }
.origin > span { width: 46px; }
.origin-grid input { width: 9px; height: 9px; background: #f3f3f3; box-shadow: 0 0 1px #ccc; }
.origin-grid input:checked { background: #999; border: 3px solid #f3f3f3; }
.devices { display: grid; grid-template-columns: 55px 1fr 1fr; gap: 8px; padding-right: 2px; margin: 11px 0 3px; }
.center { align-self: center; }

/* Palette */
.palette { display: flex; align-items: center; height: 24px; padding-left: 6px; background: linear-gradient(#f2f2f2, #c6c6c6); border-bottom: 1px solid #a5a5a5; }
.swatches { display: grid; grid-template-columns: repeat(30, 1fr); justify-items: center; width: 640px; }
.swatches button { width: 17px; height: 17px; line-height: 17px; text-align: center; }
.swatches.tools { grid-template-columns: 1fr 1fr; width: 48px; padding-left: 4px; margin-left: 2px; border-left: 1px dotted #888; }
.swatches .lt { color: #f2f2f2; }
.k00 { background: #000; } .k01 { background: #1a00ff; } .k02 { background: #f80000; } .k03 { background: #00e000; } .k04 { background: #d0d000; }
.k05 { background: #ff7f00; } .k06 { background: #00e0e0; } .k07 { background: #ff00ff; } .k08 { background: #b4b4b4; } .k09 { background: #0000a0; }
.k10 { background: #a80000; } .k11 { background: #00a000; } .k12 { background: #a0a000; } .k13 { background: #c78400; } .k14 { background: #00a0ff; }
.k15 { background: #a800a8; } .k16 { background: #808080; } .k17 { background: #7d87b9; } .k18 { background: #bb7784; } .k19 { background: #4a6fe3; }
.k20 { background: #d92a68; } .k21 { background: #78d987; } .k22 { background: #f7b47f; } .k23 { background: #fac2e4; } .k24 { background: #f78fd0; }
.k25 { background: #520078; } .k26 { background: #b85000; } .k27 { background: #00474f; } .k28 { background: #50fa78; } .k29 { background: #fddb50; }
.t1 { background: #f96400; } .t2 { background: #0a96d8; }

/* Status bar */
.status { display: flex; align-items: center; height: 23px; background: linear-gradient(#e6e6e6, #a8a8a8); }
.modes { display: flex; align-items: center; gap: 2px; width: 494px; white-space: nowrap; }
.modes label { display: flex; align-items: center; }
.coords { margin-left: 11px; }
.progress { width: 394px; height: 15px; line-height: 15px; background: #dedede; }
```
